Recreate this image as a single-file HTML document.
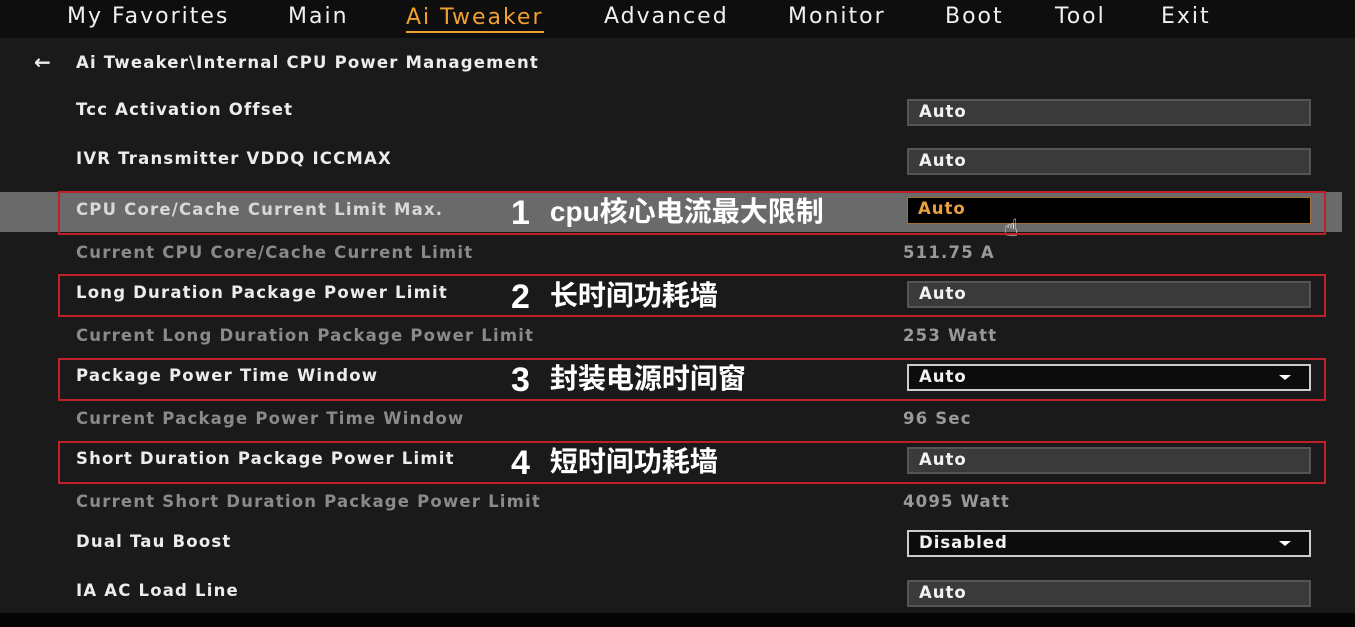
<!DOCTYPE html>
<html><head><meta charset="utf-8"><style>
*{margin:0;padding:0;box-sizing:border-box}
body{width:1355px;height:627px;overflow:hidden;background:#1a1a1a;font-family:"DejaVu Sans","Liberation Sans",sans-serif;position:relative;color:#eee}
.nav{position:absolute;left:0;top:0;width:1355px;height:38px;background:#0e0e0e}
.nav span{position:absolute;top:4px;font-size:22px;color:#f0f0f0;letter-spacing:2px}
.t{position:absolute;left:76px;font-size:16.5px;font-weight:bold;letter-spacing:1.2px;color:#ececec;white-space:nowrap}
.g{color:#8a8a8a}
.v{position:absolute;left:903px;font-size:16.5px;font-weight:bold;letter-spacing:1.2px;color:#999}
.box{position:absolute;left:907px;width:404px;height:27px;background:#3a3a3a;border:2px solid #555;color:#f2f2f2;font-size:16.5px;font-weight:bold;letter-spacing:1px;padding-left:10px;line-height:22px}
.dd{background:#0c0c0c;border:2px solid #ccc}
.dd:after{content:"";position:absolute;right:18px;top:9px;border-left:6px solid transparent;border-right:6px solid transparent;border-top:5px solid #fff}
.red{position:absolute;left:58px;width:1268px;border:2px solid #c0202a}
.ann{position:absolute;left:511px;font-family:"Liberation Sans","Noto Sans CJK SC",sans-serif;font-weight:bold;font-size:28px;color:#fff;white-space:nowrap}
.ann b{font-size:34px;margin-right:20px;vertical-align:-3px}
</style></head><body>
<div class="nav">
<span style="left:67px">My Favorites</span>
<span style="left:288px">Main</span>
<span style="left:406px;color:#f0a030;border-bottom:2px solid #f0a030;line-height:27px">Ai Tweaker</span>
<span style="left:604px">Advanced</span>
<span style="left:788px">Monitor</span>
<span style="left:945px">Boot</span>
<span style="left:1055px">Tool</span>
<span style="left:1161px">Exit</span>
</div>
<div class="t" style="left:34px;top:50px;font-size:20px">←</div>
<div class="t" style="top:53px">Ai Tweaker\Internal CPU Power Management</div>
<div class="t" style="top:100px">Tcc Activation Offset</div>
<div class="box" style="top:99px">Auto</div>
<div class="t" style="top:149px">IVR Transmitter VDDQ ICCMAX</div>
<div class="box" style="top:148px">Auto</div>
<div style="position:absolute;left:0;top:192px;width:1342px;height:40px;background:#6a6a6a"></div>
<div class="t" style="top:200px;color:#d8d8d8">CPU Core/Cache Current Limit Max.</div>
<div class="box" style="top:197px;background:#000;border:1px solid #a07030;color:#e8a040">Auto</div>
<div style="position:absolute;left:1004px;top:214px;font-size:24px;color:#fff">☝</div>
<div class="t g" style="top:243px">Current CPU Core/Cache Current Limit</div>
<div class="v" style="top:243px">511.75 A</div>
<div class="t" style="top:283px">Long Duration Package Power Limit</div>
<div class="box" style="top:281px">Auto</div>
<div class="t g" style="top:326px">Current Long Duration Package Power Limit</div>
<div class="v" style="top:326px">253 Watt</div>
<div class="t" style="top:366px">Package Power Time Window</div>
<div class="box dd" style="top:364px">Auto</div>
<div class="t g" style="top:409px">Current Package Power Time Window</div>
<div class="v" style="top:409px">96 Sec</div>
<div class="t" style="top:449px">Short Duration Package Power Limit</div>
<div class="box" style="top:447px">Auto</div>
<div class="t g" style="top:492px">Current Short Duration Package Power Limit</div>
<div class="v" style="top:492px">4095 Watt</div>
<div class="t" style="top:532px">Dual Tau Boost</div>
<div class="box dd" style="top:530px">Disabled</div>
<div class="t" style="top:581px">IA AC Load Line</div>
<div class="box" style="top:580px">Auto</div>
<div style="position:absolute;left:0;top:613px;width:1355px;height:14px;background:#050505"></div>
<div class="red" style="top:191px;height:44px"></div>
<div class="red" style="top:274px;height:43px"></div>
<div class="red" style="top:358px;height:43px"></div>
<div class="red" style="top:441px;height:43px"></div>
<div class="ann" style="top:190px"><b>1</b>cpu核心电流最大限制</div>
<div class="ann" style="top:274px"><b>2</b>长时间功耗墙</div>
<div class="ann" style="top:357px"><b>3</b>封装电源时间窗</div>
<div class="ann" style="top:440px"><b>4</b>短时间功耗墙</div>
</body></html>
